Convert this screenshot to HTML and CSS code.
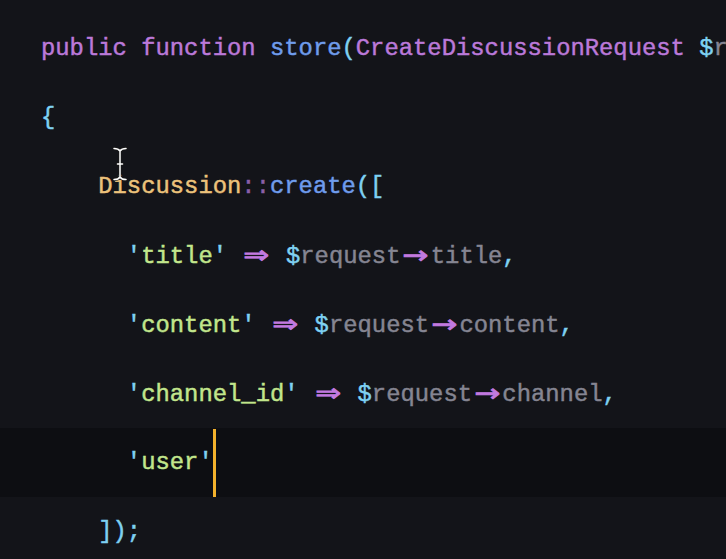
FILE: index.html
```html
<!DOCTYPE html>
<html>
<head>
<meta charset="utf-8">
<link rel="stylesheet" href="styles.css">
</head>
<body>
<div class="editor">
  <div class="line"><span class="kw">public</span> <span class="kw">function</span> <span class="fn">store</span><span class="pn">(</span><span class="kw">CreateDiscussionRequest</span> <span class="pn">$</span><span class="var">request</span><span class="pn">)</span></div>
  <div class="line"><span class="pn">{</span></div>
  <div class="line">    <span class="cls">Discussion</span><span class="op">::</span><span class="fn">create</span><span class="pn">([</span></div>
  <div class="line">      <span class="pn">'</span><span class="str">title</span><span class="pn">'</span> <span class="lig op2">⇒</span> <span class="pn">$</span><span class="var">request</span><span class="lig op2">→</span><span class="var">title</span><span class="pn">,</span></div>
  <div class="line">      <span class="pn">'</span><span class="str">content</span><span class="pn">'</span> <span class="lig op2">⇒</span> <span class="pn">$</span><span class="var">request</span><span class="lig op2">→</span><span class="var">content</span><span class="pn">,</span></div>
  <div class="line">      <span class="pn">'</span><span class="str">channel_id</span><span class="pn">'</span> <span class="lig op2">⇒</span> <span class="pn">$</span><span class="var">request</span><span class="lig op2">→</span><span class="var">channel</span><span class="pn">,</span></div>
  <div class="line current">      <span class="pn">'</span><span class="str">user</span><span class="pn">'</span><span class="caret"></span></div>
  <div class="line">    <span class="pn">]);</span></div>
  <svg class="ibeam" width="16" height="34" viewBox="0 0 16 34">
    <path d="M2 1.5 C5 1.5 7 2.5 8 4 C9 2.5 11 1.5 14 1.5 M8 4 V30 M2 32.5 C5 32.5 7 31.5 8 30 C9 31.5 11 32.5 14 32.5 M5.5 17 H10.5" fill="none" stroke="#1a1a1a" stroke-width="3.2" stroke-linecap="round"/>
    <path d="M2 1.5 C5 1.5 7 2.5 8 4 C9 2.5 11 1.5 14 1.5 M8 4 V30 M2 32.5 C5 32.5 7 31.5 8 30 C9 31.5 11 32.5 14 32.5 M5.5 17 H10.5" fill="none" stroke="#ffffff" stroke-width="1.5" stroke-linecap="round"/>
  </svg>
</div>
</body>
</html>
```
FILE: styles.css
```css
html, body {
  margin: 0;
  padding: 0;
  background: #131419;
  width: 726px;
  height: 559px;
  overflow: hidden;
}
.editor {
  position: relative;
  padding-top: 14px;
  font-family: "Liberation Mono", "DejaVu Sans Mono", monospace;
  font-size: 23.85px;
  color: #8b8b98;
  -webkit-text-stroke: 0.45px currentColor;
}
.line {
  height: 69px;
  line-height: 69px;
  padding-left: 41px;
  white-space: pre;
  overflow: hidden;
}
.line.current {
  background: #0d0e12;
}
.kw { color: #bb79d9; }
.fn { color: #6f9cec; }
.pn { color: #7fd1f2; }
.var { color: #858592; }
.cls { color: #ecc27b; }
.op { color: #8a5fa8; }
.op2 { color: #c27ae0; }
.str { color: #c2e68c; }
.lig {
  display: inline-block;
  width: 2ch;
  text-align: center;
  font-family: "DejaVu Sans", sans-serif;
  transform: scaleX(1.3);
  -webkit-text-stroke: 0.8px currentColor;
}
.caret {
  display: inline-block;
  width: 3px;
  height: 68px;
  vertical-align: top;
  margin-top: 1px;
  background: #f3b12c;
}
.ibeam {
  position: absolute;
  left: 112px;
  top: 147px;
}
```
